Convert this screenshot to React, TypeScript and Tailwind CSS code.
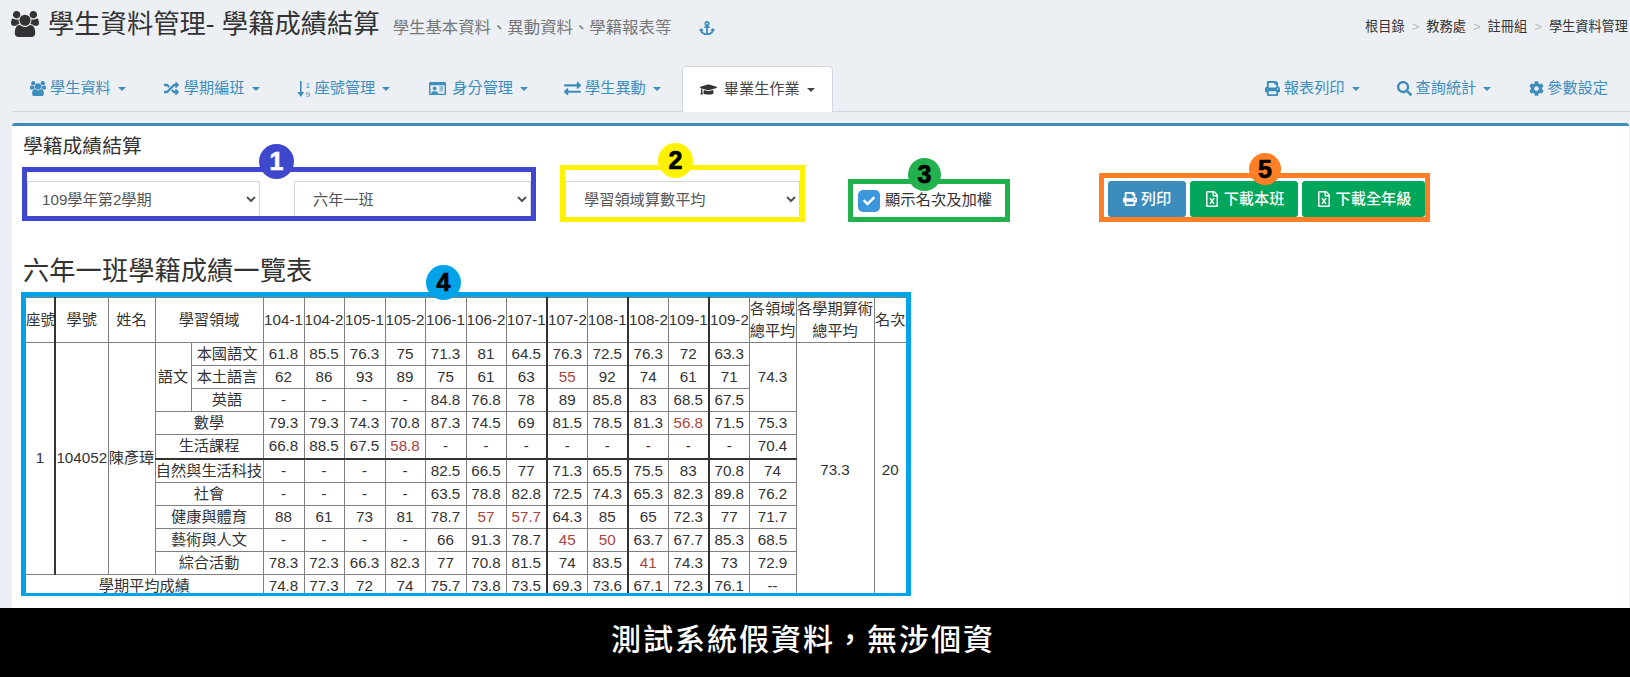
import React from "react";
import {
  FaAnchor, FaRandom, FaRegIdCard, FaExchangeAlt,
  FaGraduationCap, FaPrint, FaSearch, FaCog, FaRegFileExcel, FaCheck,
} from "react-icons/fa";

function UsersIcon({ className }: { className?: string }) {
  return (
    <svg viewBox="0 0 1920 1792" fill="currentColor" className={className}>
      <path d="M593 896q-162 5-265 128h-134q-82 0-138-40.5t-56-118.5q0-353 124-353 6 0 43.5 21t97.5 42.5 119 21.5q67 0 133-23-5 37-5 66 0 139 81 256zm1071 637q0 120-73 189.5t-194 69.5h-874q-121 0-194-69.5t-73-189.5q0-53 3.5-103.5t14-109 26.5-108.5 43-97.5 62-81 85.5-53.5 111.5-20q10 0 43 21.5t73 48 107 48 135 21.5 135-21.5 107-48 73-48 43-21.5q61 0 111.5 20t85.5 53.5 62 81 43 97.5 26.5 108.5 14 109 3.5 103.5zm-1024-1277q0 106-75 181t-181 75-181-75-75-181 75-181 181-75 181 75 75 181zm704 384q0 159-112.5 271.5t-271.5 112.5-271.5-112.5-112.5-271.5 112.5-271.5 271.5-112.5 271.5 112.5 112.5 271.5zm576 225q0 78-56 118.5t-138 40.5h-134q-103-123-265-128 81-117 81-256 0-29-5-66 66 23 133 23 59 0 119-21.5t97.5-42.5 43.5-21q124 0 124 353zm-128-609q0 106-75 181t-181 75-181-75-75-181 75-181 181-75 181 75 75 181z" />
    </svg>
  );
}

function SortNumIcon() {
  return (
    <svg viewBox="0 0 15 18" width="15" height="18" fill="currentColor">
      <rect x="3" y="1" width="1.6" height="13" />
      <polygon points="0.4,12 7.2,12 3.8,17" />
      <text x="8.5" y="7.5" fontSize="8" fontFamily="Liberation Sans">1</text>
      <text x="8.5" y="16.5" fontSize="8" fontFamily="Liberation Sans">9</text>
    </svg>
  );
}

function Caret({ dark }: { dark?: boolean }) {
  return (
    <span
      className={
        dark
          ? "ml-[7px] h-0 w-0 border-x-[4px] border-t-[4px] border-x-transparent border-t-[#444]"
          : "ml-[7px] h-0 w-0 border-x-[4px] border-t-[4px] border-x-transparent border-t-[#3c8dbc]"
      }
    />
  );
}

function Tab({ icon, label, caret = true, iconCls = "w-[20px]", cls = "" }: { icon: React.ReactNode; label: string; caret?: boolean; iconCls?: string; cls?: string }) {
  return (
    <div className={"flex h-[45px] items-center px-[18px] text-[#3c8dbc] " + cls}>
      <span className={"flex items-center text-[15px] " + iconCls}>{icon}</span>
      <span>{label}</span>
      {caret && <Caret />}
    </div>
  );
}

function Badge({ text, cls }: { text: string; cls: string }) {
  return (
    <div className={"absolute flex items-center justify-center rounded-full text-[25px] font-bold leading-none [-webkit-text-stroke:0.7px_currentColor] " + cls}>
      {text}
    </div>
  );
}

const terms = ["104-1","104-2","105-1","105-2","106-1","106-2","107-1","107-2","108-1","108-2","109-1","109-2"];
const colW = [29,53,47,36,72,41,40,41,40,41,40,41,40,41,40,41,40,47,78,32];

type Row = { label: string; vals: string[]; avg?: string };
const rows: Row[] = [
  { label: "本國語文", vals: "61.8 85.5 76.3 75 71.3 81 64.5 76.3 72.5 76.3 72 63.3".split(" "), avg: "74.3" },
  { label: "本土語言", vals: "62 86 93 89 75 61 63 55 92 74 61 71".split(" ") },
  { label: "英語", vals: "- - - - 84.8 76.8 78 89 85.8 83 68.5 67.5".split(" ") },
  { label: "數學", vals: "79.3 79.3 74.3 70.8 87.3 74.5 69 81.5 78.5 81.3 56.8 71.5".split(" "), avg: "75.3" },
  { label: "生活課程", vals: "66.8 88.5 67.5 58.8 - - - - - - - -".split(" "), avg: "70.4" },
  { label: "自然與生活科技", vals: "- - - - 82.5 66.5 77 71.3 65.5 75.5 83 70.8".split(" "), avg: "74" },
  { label: "社會", vals: "- - - - 63.5 78.8 82.8 72.5 74.3 65.3 82.3 89.8".split(" "), avg: "76.2" },
  { label: "健康與體育", vals: "88 61 73 81 78.7 57 57.7 64.3 85 65 72.3 77".split(" "), avg: "71.7" },
  { label: "藝術與人文", vals: "- - - - 66 91.3 78.7 45 50 63.7 67.7 85.3".split(" "), avg: "68.5" },
  { label: "綜合活動", vals: "78.3 72.3 66.3 82.3 77 70.8 81.5 74 83.5 41 74.3 73".split(" "), avg: "72.9" },
];
const totals = "74.8 77.3 72 74 75.7 73.8 73.5 69.3 73.6 67.1 72.3 76.1".split(" ");

const cell = "border border-[#808080] p-0 text-center align-middle whitespace-nowrap";
const thickL = "border-l-2 border-l-[#333]";
const thickB = "border-b-2 border-b-[#333]";

function isThick(i: number) {
  return i === 7 || i === 9 || i === 11;
}

function ValCell({ v, i, heavy }: { v: string; i: number; heavy: boolean }) {
  const low = v !== "-" && parseFloat(v) < 60;
  return (
    <td className={cell + (isThick(i) ? " " + thickL : "") + (heavy ? " " + thickB : "") + (low ? " text-[#a94442]" : "")}>
      {v}
    </td>
  );
}

function GradeTable() {
  return (
    <table className="w-[880px] table-fixed border-collapse text-[15.2px] leading-[22px] text-[#333]">
      <colgroup>
        {colW.map((w, i) => (
          <col key={i} style={{ width: w }} />
        ))}
      </colgroup>
      <tbody>
        <tr className="h-[44px]">
          <td className={cell + " border-l-0 text-[14.4px]"}>座號</td>
          <td className={cell + " " + thickL}>學號</td>
          <td className={cell}>姓名</td>
          <td className={cell} colSpan={2}>學習領域</td>
          {terms.map((t, i) => (
            <td key={t} className={cell + (isThick(i) ? " " + thickL : "")}>{t}</td>
          ))}
          <td className={cell}>各領域<br />總平均</td>
          <td className={cell}>各學期算術<br />總平均</td>
          <td className={cell + " border-r-0"}>名次</td>
        </tr>
        {rows.map((r, ri) => {
          const heavy = ri === 4;
          return (
            <tr key={r.label} className={ri === 4 ? "h-[24px]" : "h-[23px]"}>
              {ri === 0 && (
                <>
                  <td className={cell + " border-l-0"} rowSpan={10}>1</td>
                  <td className={cell + " " + thickL} rowSpan={10}>104052</td>
                  <td className={cell} rowSpan={10}>陳彥璋</td>
                  <td className={cell} rowSpan={3}>語文</td>
                </>
              )}
              {ri < 3 ? (
                <td className={cell}>{r.label}</td>
              ) : (
                <td className={cell + (heavy ? " " + thickB : "")} colSpan={2}>{r.label}</td>
              )}
              {r.vals.map((v, i) => (
                <ValCell key={i} v={v} i={i} heavy={heavy} />
              ))}
              {r.avg && (
                <td className={cell + (heavy ? " " + thickB : "")} rowSpan={ri === 0 ? 3 : 1}>{r.avg}</td>
              )}
              {ri === 0 && (
                <>
                  <td className={cell} rowSpan={11}>73.3</td>
                  <td className={cell + " border-r-0"} rowSpan={11}>20</td>
                </>
              )}
            </tr>
          );
        })}
        <tr className="h-[23px]">
          <td className={cell + " border-l-0"} colSpan={5}>學期平均成績</td>
          {totals.map((v, i) => (
            <ValCell key={i} v={v} i={i} heavy={false} />
          ))}
          <td className={cell}>--</td>
        </tr>
      </tbody>
    </table>
  );
}

export default function App() {
  return (
    <div className="flex h-[677px] w-[1630px] flex-col overflow-hidden bg-[#ecf0f5] font-['Liberation_Sans','Noto_Sans_CJK_TC',sans-serif] text-[15.2px] text-[#333]">
      {/* page header */}
      <header className="flex h-[66px] shrink-0 items-start justify-between pt-[6px] pl-[11px] pr-[2px]">
        <div className="flex h-[36px] items-center">
          <UsersIcon className="mr-[9px] h-[26px] w-[28px] text-[#333]" />
          <h1 className="text-[26.3px] leading-[36px] font-normal text-[#333]">學生資料管理- 學籍成績結算</h1>
          <span className="mt-[7px] ml-[13px] text-[16.4px] text-[#777]">學生基本資料、異動資料、學籍報表等</span>
          <FaAnchor className="mt-[8px] ml-[28px] text-[16px] text-[#3c8dbc]" />
        </div>
        <ol className="flex h-[42px] items-center text-[13.2px] text-[#333]">
          <li>根目錄</li>
          <li className="mx-[7px] text-[#bbb]">&gt;</li>
          <li>教務處</li>
          <li className="mx-[7px] text-[#bbb]">&gt;</li>
          <li>註冊組</li>
          <li className="mx-[7px] text-[#bbb]">&gt;</li>
          <li>學生資料管理</li>
        </ol>
      </header>

      {/* tabs */}
      <nav className="ml-[12px] flex h-[46px] shrink-0 border-b border-[#d2d6de] pr-[4px]">
        <Tab icon={<UsersIcon className="h-[15px] w-[16px]" />} label="學生資料" cls="mr-[2px]" />
        <Tab icon={<FaRandom />} label="學期編班" cls="mr-[1px]" />
        <Tab icon={<SortNumIcon />} label="座號管理" iconCls="w-[18px]" cls="mr-[3px]" />
        <Tab icon={<FaRegIdCard className="text-[17px]" />} label="身分管理" iconCls="w-[23px]" />
        <Tab icon={<FaExchangeAlt className="text-[17px]" />} label="學生異動" iconCls="w-[21px]" />
        <div className="ml-[3px] flex h-[46px] w-[151px] items-center rounded-t border border-b-0 border-[#d2d6de] bg-white pl-[17px] text-[#444]">
          <FaGraduationCap className="mr-[7px] text-[17px] text-[#333]" />
          <span>畢業生作業</span>
          <Caret dark />
        </div>
        <div className="ml-auto flex">
          <Tab icon={<FaPrint />} label="報表列印" iconCls="w-[19px]" cls="mr-[1px]" />
          <Tab icon={<FaSearch />} label="查詢統計" iconCls="w-[19px]" cls="mr-[2px]" />
          <Tab icon={<FaCog />} label="參數設定" iconCls="w-[18px]" caret={false} />
        </div>
      </nav>

      {/* content box */}
      <main className="mt-[11px] ml-[12px] w-[1617px] flex-1 rounded-t-[3px] border-t-[3px] border-[#3c8dbc] bg-white pt-[6px] pl-[10px]">
        <h3 className="ml-[1px] text-[19.8px] leading-[28px] font-normal">學籍成績結算</h3>

        <div className="flex h-[62px] items-end">
          <div className="relative mb-[1px] h-[54px] w-[514px] border-[5px] border-[#3f48cc] bg-white">
            <div className="flex h-full justify-between overflow-hidden pt-[9px]">
              <select className="h-[37px] w-[233px] border border-[#d2d6de] bg-white pl-[10px] text-[#555]">
                <option>109學年第2學期</option>
              </select>
              <select className="h-[37px] w-[237px] border border-[#d2d6de] bg-white pl-[14px] text-[#555]">
                <option>六年一班</option>
              </select>
            </div>
            <Badge text="1" cls="top-[-28px] left-[232px] h-[35px] w-[35px] bg-[#3f48cc] text-white" />
          </div>

          <div className="relative ml-[24px] h-[57px] w-[245px] border-[5px] border-[#fff200] bg-white">
            <div className="h-full overflow-hidden pt-[11px]">
              <select className="h-[37px] w-[235px] border border-[#d2d6de] bg-white pl-[14px] text-[#555]">
                <option>學習領域算數平均</option>
              </select>
            </div>
            <Badge text="2" cls="top-[-27px] left-[93px] h-[35px] w-[35px] bg-[#fff200] text-black" />
          </div>

          <div className="relative ml-[43px] flex h-[43px] w-[162px] items-center border-[5px] border-[#22b14c] bg-white pl-[5px]">
            <span className="mr-[5px] flex h-[22px] w-[22px] items-center justify-center rounded-[5px] bg-[#3c97dd] text-[12px] text-white">
              <FaCheck />
            </span>
            <span className="text-[15.3px]">顯示名次及加權</span>
            <Badge text="3" cls="top-[-26px] left-[55px] h-[33px] w-[33px] bg-[#22b14c] text-black" />
          </div>

          <div className="relative ml-[89px] flex h-[49px] w-[331px] items-end gap-[4px] border-[5px] border-[#ff7f27] bg-white pl-[4px]">
            <button className="flex h-[36px] w-[78px] items-center justify-center gap-[4px] rounded-[3px] bg-[#3c8dbc] font-medium text-white">
              <FaPrint className="text-[14px]" />列印
            </button>
            <button className="flex h-[36px] w-[108px] items-center justify-center gap-[4px] rounded-[3px] bg-[#00a65a] font-medium text-white">
              <FaRegFileExcel className="text-[16px]" />下載本班
            </button>
            <button className="flex h-[36px] w-[123px] items-center justify-center gap-[4px] rounded-[3px] bg-[#00a65a] font-medium text-white">
              <FaRegFileExcel className="text-[16px]" />下載全年級
            </button>
            <Badge text="5" cls="top-[-25px] left-[145px] h-[32px] w-[32px] bg-[#ff7f27] text-black" />
          </div>
        </div>

        <h2 className="mt-[31px] ml-[1px] text-[26.3px] leading-[36px] font-normal">六年一班學籍成績一覽表</h2>

        <div className="relative mt-[3px] -ml-[1px] w-[890px]">
          <div className="h-[304px] overflow-hidden border-x-[5px] border-t-[5px] border-b-[3px] border-[#00a2e8] bg-white">
            <GradeTable />
          </div>
          <Badge text="4" cls="top-[-27px] left-[405px] h-[35px] w-[35px] bg-[#00a2e8] text-black" />
        </div>
      </main>

      {/* footer banner */}
      <footer className="flex h-[69px] shrink-0 items-center justify-center bg-black pr-[24px] pb-[7px]">
        <span className="text-[30px] font-medium tracking-[2px] text-white">測試系統假資料，無涉個資</span>
      </footer>
    </div>
  );
}
